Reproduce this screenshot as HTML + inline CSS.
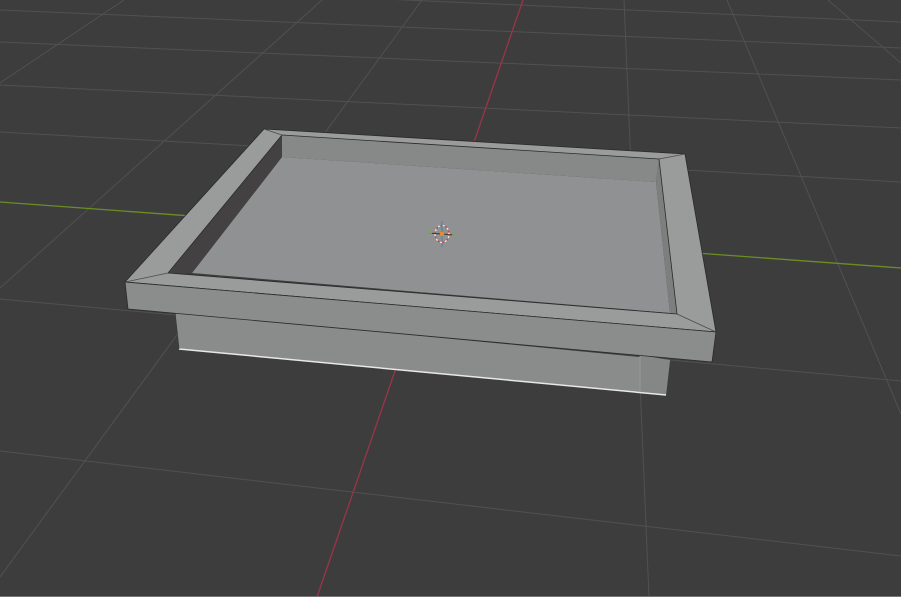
<!DOCTYPE html>
<html><head><meta charset="utf-8"><style>html,body{margin:0;padding:0;background:#3d3d3d;overflow:hidden}svg{display:block}</style></head>
<body>
<svg width="901" height="597" viewBox="0 0 901 597" xmlns="http://www.w3.org/2000/svg">
<rect width="901" height="597" fill="#3d3d3d"/>
<g stroke="#515151" stroke-width="1" fill="none">
<line x1="0" y1="-18" x2="901" y2="22"/>
<line x1="0" y1="10" x2="901" y2="48"/>
<line x1="0" y1="42" x2="901" y2="80"/>
<line x1="0" y1="85" x2="901" y2="128"/>
<line x1="0" y1="132" x2="901" y2="182"/>
<line x1="0" y1="299" x2="901" y2="381"/>
<line x1="0" y1="451" x2="901" y2="556"/>
<line x1="124" y1="0" x2="0" y2="83"/>
<line x1="322" y1="0" x2="0" y2="288"/>
<line x1="422" y1="0" x2="0" y2="577"/>
<line x1="624" y1="0" x2="649" y2="597"/>
<line x1="727" y1="0" x2="901" y2="414"/>
<line x1="828" y1="0" x2="901" y2="63"/>
</g>
<line x1="0" y1="202" x2="901" y2="268" stroke="#6a8e23" stroke-width="1.3"/>
<line x1="523" y1="0" x2="317" y2="597" stroke="#9a3546" stroke-width="1.3"/>
<line x1="0" y1="596.5" x2="901" y2="596.5" stroke="#777" stroke-width="1"/>
<!-- base -->
<polygon points="175,312 670,360 666,395 179,349" fill="#8a8b8b"/>
<polygon points="640,355 670,360 666,395 640,391" fill="#858686"/>
<line x1="640" y1="356" x2="640" y2="391" stroke="#9c9d9d" stroke-width="0.8"/>
<line x1="179" y1="349" x2="666" y2="395" stroke="#e8e8e8" stroke-width="1.5"/>
<line x1="175" y1="312" x2="179" y2="349" stroke="#3a3a3a" stroke-width="0.8"/>
<!-- floor -->
<polygon points="282,157 656,182 670,313 192,273" fill="#909192"/>
<!-- back wall -->
<polygon points="282,135 659,159 656,182 282,157" fill="#878888"/>
<!-- left wall -->
<polygon points="282,135 282,157 192,273 168,273" fill="#434141"/>
<!-- right wall -->
<polygon points="659,159 677,314 670,313 656,182" fill="#7d7e7e"/>
<!-- rim top -->
<path d="M264,129 L685,154 L716,332 L125,282 Z M282,135 L168,273 L677,314 L659,159 Z" fill="#9a9b9b" fill-rule="evenodd" stroke="#2a2a2a" stroke-width="0.8" stroke-linejoin="round"/>
<g stroke="#4a4a4a" stroke-width="0.7">
<line x1="264" y1="129" x2="282" y2="135"/>
<line x1="685" y1="154" x2="659" y2="159"/>
<line x1="716" y1="332" x2="677" y2="314"/>
<line x1="125" y1="282" x2="168" y2="273"/>
</g>
<!-- front face -->
<polygon points="125,282 716,332 712,362 128,309" fill="#8b8c8c" stroke="#2a2a2a" stroke-width="0.8"/>
<!-- gizmo -->
<g transform="translate(442,234)">
<line x1="0" y1="-13" x2="0" y2="13" stroke="#5a7fb0" stroke-width="1.2"/>
<line x1="-14" y1="-1" x2="13" y2="1" stroke="#333" stroke-width="1"/>
<line x1="-14" y1="-1" x2="-10" y2="-1" stroke="#7ab030" stroke-width="1.4"/>
<line x1="10" y1="1" x2="14" y2="1" stroke="#7ab030" stroke-width="1.4"/>
<ellipse rx="7" ry="8.5" fill="none" stroke="#d04040" stroke-width="1.3" stroke-dasharray="3 2"/>
<ellipse rx="7" ry="8.5" fill="none" stroke="#eeeeee" stroke-width="1.3" stroke-dasharray="2 3" stroke-dashoffset="3"/>
<circle r="2.2" fill="#f08a1c"/>
</g>
</svg>
</body></html>
